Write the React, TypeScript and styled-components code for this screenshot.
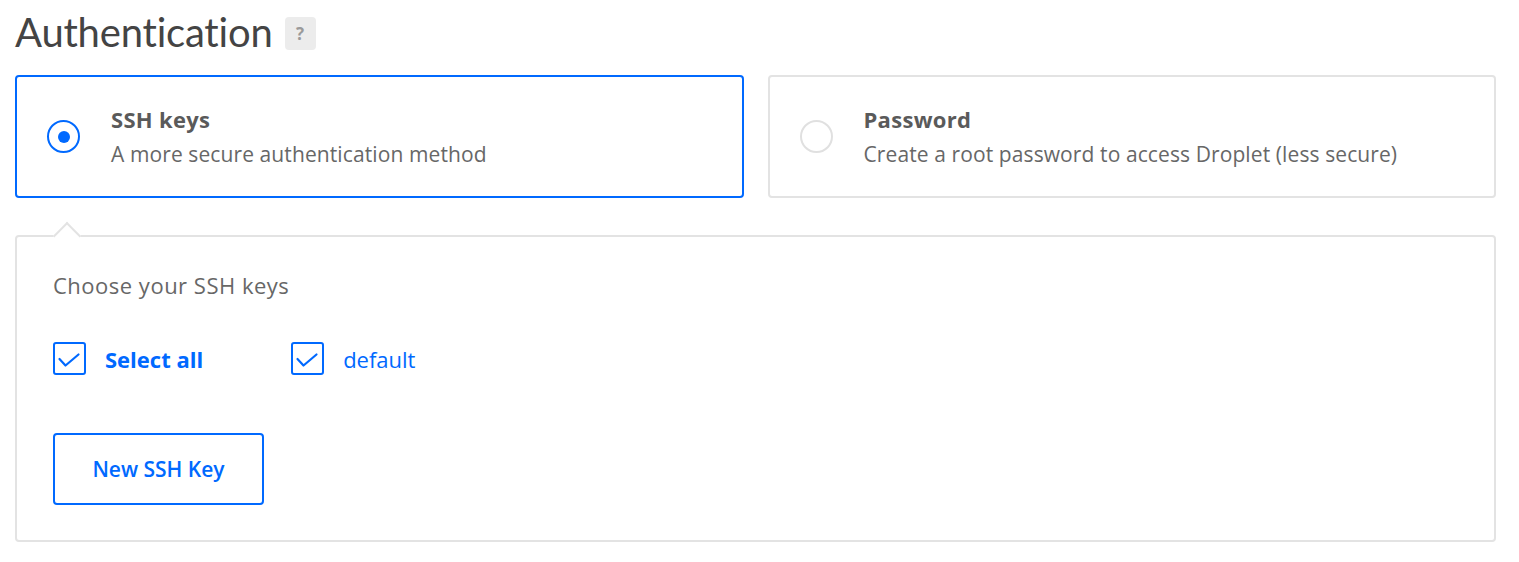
import { useState } from "react";
import styled, { createGlobalStyle, css } from "styled-components";

const BLUE = "#0069ff";

const GlobalStyle = createGlobalStyle`
  body {
    margin: 0;
    background: #fff;
    font-family: "Open Sans", "Lato", Arial, sans-serif;
    color: #676767;
  }
`;

type AuthMethod = "ssh" | "password";

const options: { id: AuthMethod; title: string; text: string }[] = [
  { id: "ssh", title: "SSH keys", text: "A more secure authentication method" },
  {
    id: "password",
    title: "Password",
    text: "Create a root password to access Droplet (less secure)",
  },
];

const keys = [
  { id: "all", label: "Select all", strong: true },
  { id: "default", label: "default", strong: false },
];

function CheckIcon() {
  return (
    <svg width="33" height="33" viewBox="0 0 33 33" fill="none">
      <path
        d="M6.5 17 L12.5 23.5 L25.5 12.5"
        stroke={BLUE}
        strokeWidth="2.2"
        strokeLinecap="round"
        strokeLinejoin="round"
      />
    </svg>
  );
}

function App() {
  const [method, setMethod] = useState<AuthMethod>("ssh");
  const [checked, setChecked] = useState<Record<string, boolean>>({
    all: true,
    default: true,
  });

  return (
    <>
      <GlobalStyle />
      <Page>
        <HeadingRow>
          <Heading>Authentication</Heading>
          <HelpBadge>?</HelpBadge>
        </HeadingRow>
        <OptionGrid>
          {options.map((o) => (
            <OptionCard
              key={o.id}
              $selected={method === o.id}
              onClick={() => setMethod(o.id)}
            >
              <Radio $selected={method === o.id} />
              <OptionText>
                <OptionTitle>{o.title}</OptionTitle>
                <OptionDesc>{o.text}</OptionDesc>
              </OptionText>
            </OptionCard>
          ))}
        </OptionGrid>
        {method === "ssh" && (
          <KeysPanel>
            <PanelArrow />
            <PanelLabel>Choose your SSH keys</PanelLabel>
            <KeyRow>
              {keys.map((k) => (
                <KeyItem
                  key={k.id}
                  onClick={() =>
                    setChecked((c) => ({ ...c, [k.id]: !c[k.id] }))
                  }
                >
                  <CheckBox>{checked[k.id] && <CheckIcon />}</CheckBox>
                  <KeyLabel $strong={k.strong}>{k.label}</KeyLabel>
                </KeyItem>
              ))}
            </KeyRow>
            <NewKeyButton>New SSH Key</NewKeyButton>
          </KeysPanel>
        )}
      </Page>
    </>
  );
}

const Page = styled.div`
  padding: 7px 23px 20px 15px;
`;

const HeadingRow = styled.div`
  display: flex;
  align-items: center;
  gap: 12px;
  height: 50px;
`;

const Heading = styled.h1`
  margin: 0;
  font-family: "Lato", "Open Sans", Arial, sans-serif;
  font-size: 40px;
  font-weight: 400;
  line-height: 50px;
  color: #444;
  letter-spacing: -0.2px;
`;

const HelpBadge = styled.span`
  display: flex;
  align-items: center;
  justify-content: center;
  width: 31px;
  height: 33px;
  margin-top: 2px;
  border-radius: 4px;
  background: #ececec;
  color: #9a9a9a;
  font-size: 17px;
  font-weight: 700;
`;

const OptionGrid = styled.div`
  display: grid;
  grid-template-columns: 1fr 1fr;
  gap: 24px;
  margin-top: 18px;
`;

const OptionCard = styled.div<{ $selected: boolean }>`
  display: flex;
  align-items: center;
  gap: 31px;
  box-sizing: border-box;
  height: 123px;
  padding: 0 0 0 30px;
  border: 2px solid ${({ $selected }) => ($selected ? BLUE : "#e3e3e3")};
  border-radius: 4px;
  background: #fff;
  cursor: pointer;
`;

const Radio = styled.span<{ $selected: boolean }>`
  position: relative;
  flex: none;
  box-sizing: border-box;
  width: 33px;
  height: 33px;
  border-radius: 50%;
  border: 2px solid ${({ $selected }) => ($selected ? BLUE : "#e0e0e0")};
  ${({ $selected }) =>
    $selected &&
    css`
      &::after {
        content: "";
        position: absolute;
        top: 50%;
        left: 50%;
        width: 12px;
        height: 12px;
        margin: -6px 0 0 -6px;
        border-radius: 50%;
        background: ${BLUE};
      }
    `}
`;

const OptionText = styled.div`
  display: flex;
  flex-direction: column;
  gap: 7px;
`;

const OptionTitle = styled.div`
  font-size: 22px;
  font-weight: 700;
  line-height: 28px;
  letter-spacing: 0.3px;
  color: #5a5a5a;
`;

const OptionDesc = styled.div`
  font-size: 21px;
  line-height: 28px;
  letter-spacing: 0.1px;
  color: #676767;
`;

const KeysPanel = styled.section`
  position: relative;
  margin-top: 37px;
  box-sizing: border-box;
  height: 307px;
  padding: 34px 36px 0;
  border: 2px solid #e3e3e3;
  border-radius: 4px;
`;

const PanelArrow = styled.span`
  position: absolute;
  top: -11px;
  left: 40px;
  width: 18px;
  height: 18px;
  background: #fff;
  border-top: 2px solid #e3e3e3;
  border-left: 2px solid #e3e3e3;
  transform: rotate(45deg);
`;

const PanelLabel = styled.div`
  font-size: 22px;
  line-height: 28px;
  letter-spacing: 0.5px;
  color: #676767;
`;

const KeyRow = styled.div`
  display: flex;
  align-items: center;
  gap: 88px;
  margin-top: 43px;
`;

const KeyItem = styled.label`
  display: flex;
  align-items: center;
  gap: 19px;
  cursor: pointer;
`;

const CheckBox = styled.span`
  display: flex;
  box-sizing: border-box;
  width: 33px;
  height: 33px;
  border: 2px solid ${BLUE};
  border-radius: 3px;

  svg {
    margin: -2px;
  }
`;

const KeyLabel = styled.span<{ $strong: boolean }>`
  font-size: 22px;
  font-weight: ${({ $strong }) => ($strong ? 700 : 400)};
  color: ${BLUE};
`;

const NewKeyButton = styled.button`
  display: block;
  width: 211px;
  height: 72px;
  margin-top: 58px;
  border: 2px solid ${BLUE};
  border-radius: 4px;
  background: #fff;
  color: ${BLUE};
  font-family: inherit;
  font-size: 21px;
  font-weight: 600;
  cursor: pointer;
`;

export default App;
